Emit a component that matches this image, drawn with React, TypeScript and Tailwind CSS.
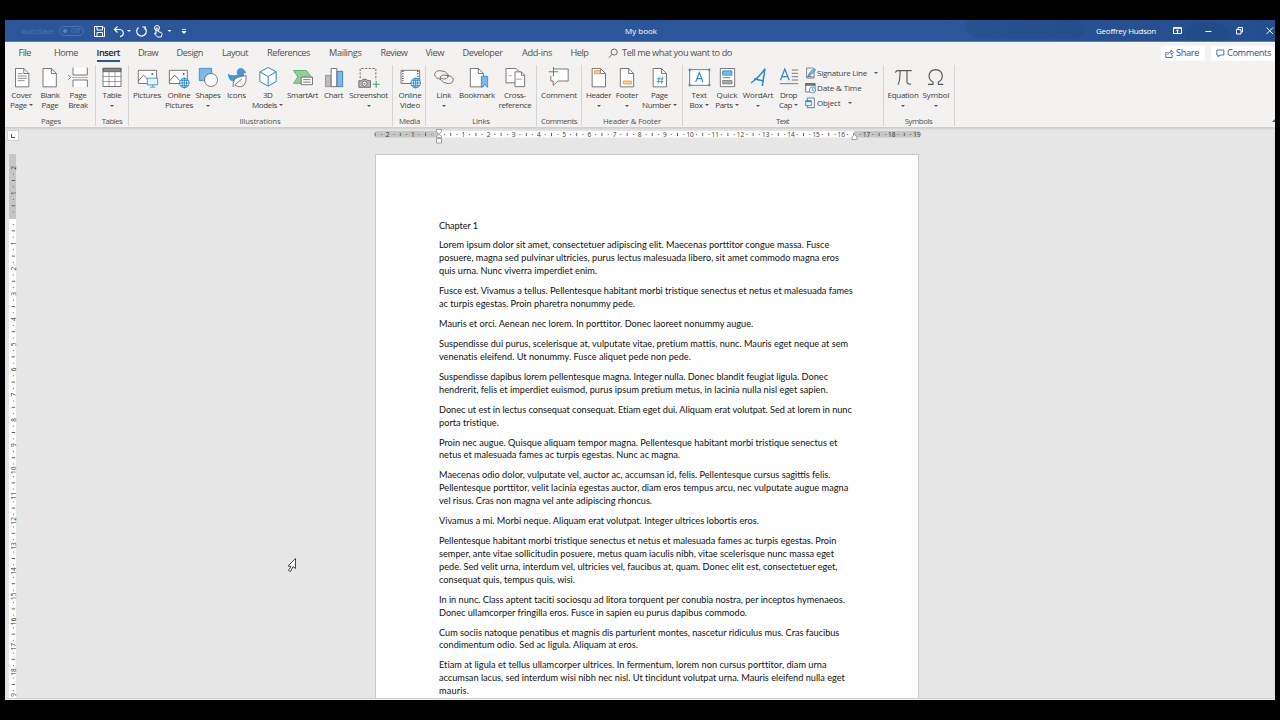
import React, { useLayoutEffect, useRef } from "react";

/** Single line of text, tracked so that it occupies `w` pixels. */
function Fit({ w, children, className = "" }: { w: number; children: string; className?: string }) {
  const ref = useRef<HTMLSpanElement>(null);
  useLayoutEffect(() => {
    const el = ref.current;
    if (!el) return;
    el.style.letterSpacing = "0px";
    const natural = el.getBoundingClientRect().width;
    el.style.letterSpacing = `${(w - natural) / children.length}px`;
  }, [w, children]);
  return (
    <span ref={ref} className={`inline-block whitespace-pre ${className}`}>
      {children}
    </span>
  );
}

const INK = "#5a5a5a";
const BLUE = "#2b88c8";
const SKY = "#7fb8e8";

const Icon = ({ x, children }: { x: number; children: React.ReactNode }) => (
  <svg
    className="block h-6 w-7 shrink-0 overflow-visible"
    viewBox={`${x - 42} 150 84 72`}
    fill="none"
    stroke={INK}
    strokeWidth="2.4"
  >
    {children}
  </svg>
);

const Doc = ({ x, w = 40 }: { x: number; w?: number }) => (
  <>
    <path d={`M${x} 160.500h${w - 15}l15 15v40h-${w}z`} fill="#fff" />
    <path d={`M${x + w - 15} 160.500v15h15`} />
  </>
);

const Globe = ({ x, y }: { x: number; y: number }) => (
  <g stroke={BLUE} strokeWidth="2.6">
    <circle cx={x} cy={y} r="14.500" fill="#eef6fc" />
    <ellipse cx={x} cy={y} rx="6.500" ry="14.500" />
    <path d={`M${x - 14.5} ${y}h29M${x - 12} ${y - 8}h24M${x - 12} ${y + 8}h24M${x} ${y - 14.5}v29`} />
  </g>
);

const Plus = ({ x, y, r = 10 }: { x: number; y: number; r?: number }) => (
  <path d={`M${x - r} ${y}h${2 * r}M${x} ${y - r}v${2 * r}`} stroke="#35a567" strokeWidth="3.200" />
);

const Caret = ({ className = "" }: { className?: string }) => (
  <svg className={`inline-block h-[2px] w-[4px] shrink-0 ${className}`} viewBox="0 0 4 2">
    <path d="M0 0h4L2 2z" fill="#555" />
  </svg>
);

type Line = [string, number, boolean?];

function Btn({ cls, icon, lines, caret }: { cls: string; icon: React.ReactNode; lines: Line[]; caret?: boolean }) {
  return (
    <div className={`flex shrink-0 flex-col items-center ${cls}`}>
      {icon}
      <div className="mt-[1px] flex flex-col items-center text-[8px] leading-[10.300px] text-[#404040]">
        {lines.map(([t, w, c]) => (
          <div key={t} className="flex items-center">
            <Fit w={w}>{t}</Fit>
            {c && <Caret className="ml-[2px]" />}
          </div>
        ))}
        {caret && <Caret className="mt-[4.500px]" />}
      </div>
    </div>
  );
}

function Group({ cls, label, w, children, labelCls = "" }: { cls: string; label: string; w: number; children: React.ReactNode; labelCls?: string }) {
  return (
    <div className={`flex h-[61px] shrink-0 flex-col justify-between border-r border-[#d6d4d2] ${cls}`}>
      <div className="flex h-[50px]">{children}</div>
      <div className={`flex h-[10px] justify-center text-[7.800px] leading-[10px] text-[#505050] ${labelCls}`}>
        <Fit w={w}>{label}</Fit>
      </div>
    </div>
  );
}

function Small({ icon, text, w, caret, gap = "ml-1" }: { icon: React.ReactNode; text: string; w: number; caret?: boolean; gap?: string }) {
  return (
    <div className="flex h-[15.300px] items-center text-[8px] leading-[12px] text-[#404040]">
      <svg className="mr-[1px] block h-[12px] w-[11px] overflow-visible" viewBox="0 0 33 36" fill="none" stroke={INK} strokeWidth="2.400">
        {icon}
      </svg>
      <Fit w={w}>{text}</Fit>
      {caret && <Caret className={gap} />}
    </div>
  );
}

const tabs: [string, number, string][] = [
  ["File", 12.5, "ml-[13.500px]"],
  ["Home", 24, "ml-[23px]"],
  ["Insert", 23.5, "ml-[18.500px]"],
  ["Draw", 20, "ml-[18px]"],
  ["Design", 26.5, "ml-[18.500px]"],
  ["Layout", 26, "ml-[19px]"],
  ["References", 43, "ml-[19px]"],
  ["Mailings", 32.5, "ml-[19px]"],
  ["Review", 27, "ml-[19px]"],
  ["View", 18.5, "ml-[18px]"],
  ["Developer", 40, "ml-[18.500px]"],
  ["Add-ins", 30, "ml-[19.500px]"],
  ["Help", 18, "ml-[18.500px]"],
];

const paragraphs: [string, number][][] = [
  [["Chapter 1", 39]],
  [
    ["Lorem ipsum dolor sit amet, consectetuer adipiscing elit. Maecenas porttitor congue massa. Fusce", 390],
    ["posuere, magna sed pulvinar ultricies, purus lectus malesuada libero, sit amet commodo magna eros", 400],
    ["quis urna. Nunc viverra imperdiet enim.", 158],
  ],
  [
    ["Fusce est. Vivamus a tellus. Pellentesque habitant morbi tristique senectus et netus et malesuada fames", 414],
    ["ac turpis egestas. Proin pharetra nonummy pede.", 196],
  ],
  [["Mauris et orci. Aenean nec lorem. In porttitor. Donec laoreet nonummy augue.", 314]],
  [
    ["Suspendisse dui purus, scelerisque at, vulputate vitae, pretium mattis, nunc. Mauris eget neque at sem", 409],
    ["venenatis eleifend. Ut nonummy. Fusce aliquet pede non pede.", 252],
  ],
  [
    ["Suspendisse dapibus lorem pellentesque magna. Integer nulla. Donec blandit feugiat ligula. Donec", 389],
    ["hendrerit, felis et imperdiet euismod, purus ipsum pretium metus, in lacinia nulla nisl eget sapien.", 389],
  ],
  [
    ["Donec ut est in lectus consequat consequat. Etiam eget dui. Aliquam erat volutpat. Sed at lorem in nunc", 413],
    ["porta tristique.", 60],
  ],
  [
    ["Proin nec augue. Quisque aliquam tempor magna. Pellentesque habitant morbi tristique senectus et", 398.5],
    ["netus et malesuada fames ac turpis egestas. Nunc ac magna.", 241],
  ],
  [
    ["Maecenas odio dolor, vulputate vel, auctor ac, accumsan id, felis. Pellentesque cursus sagittis felis.", 391.5],
    ["Pellentesque porttitor, velit lacinia egestas auctor, diam eros tempus arcu, nec vulputate augue magna", 409],
    ["vel risus. Cras non magna vel ante adipiscing rhoncus.", 213],
  ],
  [["Vivamus a mi. Morbi neque. Aliquam erat volutpat. Integer ultrices lobortis eros.", 320]],
  [
    ["Pellentesque habitant morbi tristique senectus et netus et malesuada fames ac turpis egestas. Proin", 397.5],
    ["semper, ante vitae sollicitudin posuere, metus quam iaculis nibh, vitae scelerisque nunc massa eget", 395],
    ["pede. Sed velit urna, interdum vel, ultricies vel, faucibus at, quam. Donec elit est, consectetuer eget,", 398.5],
    ["consequat quis, tempus quis, wisi.", 136],
  ],
  [
    ["In in nunc. Class aptent taciti sociosqu ad litora torquent per conubia nostra, per inceptos hymenaeos.", 406],
    ["Donec ullamcorper fringilla eros. Fusce in sapien eu purus dapibus commodo.", 308],
  ],
  [
    ["Cum sociis natoque penatibus et magnis dis parturient montes, nascetur ridiculus mus. Cras faucibus", 400.5],
    ["condimentum odio. Sed ac ligula. Aliquam at eros.", 199],
  ],
  [
    ["Etiam at ligula et tellus ullamcorper ultrices. In fermentum, lorem non cursus porttitor, diam urna", 387.5],
    ["accumsan lacus, sed interdum wisi nibh nec nisl. Ut tincidunt volutpat urna. Mauris eleifend nulla eget", 406],
    ["mauris.", 30],
  ],
];

const CM = 25.2;

function Marks({ from, to, vertical }: { from: number; to: number; vertical?: boolean }) {
  const out: React.ReactNode[] = [];
  for (let q = from * 4; q <= to * 4; q++) {
    if (q === 0) continue;
    const p = (q / 4) * CM;
    if (q % 4 === 0) {
      out.push(
        <text
          key={q}
          transform={vertical ? `translate(6.600 ${p}) rotate(-90)` : `translate(${p} 6.300)`}
          textAnchor="middle"
          fontSize="6.500"
          fill="#333"
        >
          {Math.abs(q / 4)}
        </text>
      );
    } else {
      const len = q % 2 === 0 ? 3.4 : 1;
      out.push(
        vertical ? (
          <rect key={q} x={4.4 - len / 2} y={p - 0.5} width={len} height="1" fill="#666" />
        ) : (
          <rect key={q} x={p - 0.5} y={4 - len / 2} width="1" height={len} fill="#666" />
        )
      );
    }
  }
  return <>{out}</>;
}

function TitleBar() {
  return (
    <div className="relative flex h-[22px] shrink-0 items-center overflow-hidden border-b border-[#5b7db4] bg-[#2b579a] text-white">
      <svg className="absolute top-0 right-0 h-[22px] w-[330px]" viewBox="0 0 330 22">
        <defs>
          <linearGradient id="fade" x1="0" x2="1">
            <stop offset="0" stopColor="#244d8c" stopOpacity="0" />
            <stop offset="0.500" stopColor="#244d8c" stopOpacity=".7" />
            <stop offset="1" stopColor="#244d8c" stopOpacity=".9" />
          </linearGradient>
        </defs>
        <rect width="330" height="22" fill="url(#fade)" />
        <path d="M22 0h110q8 6 8 11t-8 8H32q-14-8-10-19z" fill="#21477f" opacity=".35" />
        <ellipse cx="262" cy="14" rx="22" ry="12" fill="#21477f" opacity=".5" />
      </svg>
      <div className="relative flex w-full items-center">
        <Fit w={33} className="ml-[16px] text-[8px] text-[#5075af]">AutoSave</Fit>
        <div className="ml-[5px] flex h-[10px] w-[25px] shrink-0 items-center rounded-full border border-[#4d73ae] px-[3px] text-[#5075af]">
          <span className="h-[4px] w-[4px] rounded-full bg-[#5f82b8]" />
          <Fit w={9} className="ml-[4px] text-[6.500px] leading-[8px]">Off</Fit>
        </div>
        <svg className="ml-[9px] block h-[14px] w-[98px] shrink-0" viewBox="93 24 98 14" fill="none" stroke="#fff" strokeWidth="1">
          <path d="M94.500 26.500h8.500l1.500 1.500v8.500h-10zM97 26.500v3.500h5.500v-3.500M97 36.500v-4h5.500v4" />
          <path d="M117.500 26.500l-3 3 3 3M114.500 29.500h5q4 .5 3.800 4-.3 2.800-3.300 3.200" strokeWidth="1.200" />
          <path d="M127 30h4l-2 2zM167.500 30h4l-2 2z" fill="#fff" stroke="none" />
          <path d="M138.500 27.500a4.800 4.800 0 1 0 6 0M142.200 27h3v3" strokeWidth="1.200" />
          <circle cx="157" cy="28" r="2.500" />
          <path d="M156 34v-5.500q1-1.300 2 0v3l3.300 1q1 .5.600 2l-.7 2.500h-3.700l-3-3.200q-.3-1.300 1.500-.3" />
          <path d="M182 29.500h4M182 31.500h4l-2 2z" fill="#fff" strokeWidth=".8" />
        </svg>
        <Fit w={32} className="ml-[434px] text-[8px]">My book</Fit>
        <Fit w={60} className="ml-[439px] text-[8px]">Geoffrey Hudson</Fit>
        <svg className="ml-[17px] block h-[12px] w-[102px] shrink-0" viewBox="1173 25 102 12" fill="none" stroke="#fff" strokeWidth="1">
          <path d="M1173.500 27.500h8v6h-8zM1173.500 28.300h8M1177.500 33v-3M1176 31.200l1.500-1.500 1.500 1.500M1205.500 31.500h6" />
          <path d="M1236.500 29.500h4.500v4.500h-4.500zM1238 29v-1.500h4.500v4.500h-1.500M1266.500 27.500l6.500 6.500M1273 27.500l-6.500 6.500" />
        </svg>
      </div>
    </div>
  );
}

function Tabs() {
  return (
    <div className="flex h-[21px] shrink-0 items-center pt-[1px] text-[9.200px] leading-[14px] text-[#505050]">
      {tabs.map(([t, w, ml]) => (
        <div
          key={t}
          className={`flex h-[18px] items-center border-b-2 pt-[1px] ${ml} ${t === "Insert" ? "border-[#2b579a] text-[#222]" : "border-transparent"}`}
        >
          <Fit w={w} className={t === "Insert" ? "font-semibold" : ""}>{t}</Fit>
        </div>
      ))}
      <svg className="ml-[19px] block h-[11px] w-[11px]" viewBox="0 0 11 11" fill="none" stroke="#666">
        <circle cx="6.500" cy="4" r="3.200" />
        <path d="M4 6.500L.8 10" />
      </svg>
      <Fit w={110} className="ml-[4px]">Tell me what you want to do</Fit>
      <div className="ml-[429px] flex h-[15px] w-[44px] shrink-0 items-center bg-white text-[#2b4f8f]">
        <svg className="ml-[4px] block h-[9px] w-[9px]" viewBox="0 0 9 9" fill="none" stroke="#44649c" strokeWidth=".9">
          <path d="M2.500 3.500H.8v5h6.400V6M2.500 6Q3 3 6 3V1l2.300 2.500L6 5.500V4" />
        </svg>
        <Fit w={23} className="ml-[2px] font-medium">Share</Fit>
      </div>
      <div className="ml-[6px] flex h-[15px] w-[64px] shrink-0 items-center bg-white text-[#2b4f8f]">
        <svg className="ml-[5px] block h-[9px] w-[9px]" viewBox="0 0 9 9" fill="none" stroke="#44649c" strokeWidth=".9">
          <path d="M.8 1h7v5H4L2.200 8V6H.8z" />
        </svg>
        <Fit w={44} className="ml-[2px] font-medium">Comments</Fit>
      </div>
    </div>
  );
}

function Ribbon() {
  return (
    <div className="relative flex h-[64px] shrink-0 pt-[2px]">
      <Group cls="w-[91px] pl-[2px]" label="Pages" w={20}>
        <Btn cls="w-[29px]" lines={[["Cover", 20.5], ["Page", 17, true]]} icon={
          <Icon x={64.5}><Doc x={45} /><path d="M52 176h14M52 183h27M52 190h27M52 197h20" strokeWidth="2" /></Icon>} />
        <Btn cls="w-[28px]" lines={[["Blank", 19], ["Page", 17]]} icon={<Icon x={150}><Doc x={129} /></Icon>} />
        <Btn cls="w-[28px]" lines={[["Page", 17], ["Break", 19.5]]} icon={
          <Icon x={234}>
            <path d="M219 158v22h43v-22M219 216v-21h43v21" fill="#fff" />
            <path d="M216 187.500h48" stroke="#aaa" />
            <path d="M205 180l7 7-7 7" stroke={BLUE} strokeWidth="3" />
          </Icon>} />
      </Group>
      <Group cls="w-[33px] pl-[0px]" label="Tables" w={20.5}>
        <Btn cls="w-[32px]" caret lines={[["Table", 19]]} icon={
          <Icon x={336}>
            <path d="M309 160h54v54.500h-54z" fill="#fff" />
            <path d="M309 160h54v10h-54z" fill="#8a8a8a" />
            <path d="M327 170v44M345 170v44M309 184.500h54M309 199.500h54" stroke="#888" />
          </Icon>} />
      </Group>
      <Group cls="w-[264px] pl-[2px]" label="Illustrations" w={41} labelCls="pr-[3px]">
        <Btn cls="w-[32px]" lines={[["Pictures", 28]]} icon={
          <Icon x={441}>
            <path d="M415 166h55v39.500h-55z" fill="#fff" />
            <path d="M415 198l16-18 15 17" />
            <circle cx="457" cy="177" r="3" fill={INK} stroke="none" />
            <path d="M442 189.500h31v20h-31z" fill="#e6f2fb" stroke={BLUE} />
            <path d="M458 210v6M450 216.500h16" stroke={BLUE} />
          </Icon>} />
        <Btn cls="w-[32px]" lines={[["Online", 23], ["Pictures", 28]]} icon={
          <Icon x={537}>
            <path d="M508 166h54v39.500h-54z" fill="#fff" />
            <path d="M508 198l16-18 15 17" />
            <circle cx="551" cy="177" r="3" fill={INK} stroke="none" />
            <Globe x={553} y={204} />
          </Icon>} />
        <Btn cls="w-[26px]" caret lines={[["Shapes", 25]]} icon={
          <Icon x={624}>
            <path d="M598 160h37v37h-37z" fill={SKY} stroke={BLUE} />
            <circle cx="633" cy="195" r="19.500" fill="#fff" />
          </Icon>} />
        <Btn cls="w-[31px]" lines={[["Icons", 19]]} icon={
          <Icon x={709.5}>
            <path d="M711 180q-4-7-1-14 4-7 12-7 9 1 11 9l5 3q-2 4-7 4-2 4-1 9-8 10-22 15h-13q-12-6-13-23 8 5 15 5z" fill="#4a97cf" stroke="none" />
            <path d="M698 216q-2-24 14-29 12-4 25-5 2 20-7 29-11 9-27-1l22-19" fill="#fff" />
          </Icon>} />
        <Btn cls="w-[31px]" lines={[["3D", 9], ["Models", 25, true]]} icon={
          <Icon x={802.5}>
            <path d="M803 157.500l24 13v29l-24 14-25-14v-29z" fill="#fff" stroke={BLUE} strokeWidth="3" />
            <path d="M778 170.500l25 14 24-14M803 185v28" stroke={BLUE} strokeWidth="3" />
          </Icon>} />
        <Btn cls="w-[39px]" lines={[["SmartArt", 31]]} icon={
          <Icon x={907.5}>
            <path d="M879 166.500h39l14 19-14 19.500h-39l13-19.500z" fill="#93cf9b" stroke="#4aa764" />
            <path d="M902 186.500h34v22.500h-34z" fill="#fff" />
            <path d="M908 194h22M908 201.500h22" />
          </Icon>} />
        <Btn cls="w-[23px]" lines={[["Chart", 19]]} icon={
          <Icon x={40.5}>
            <path d="M15 181h17v34H15z" fill="#bdbdbd" stroke="#888" />
            <path d="M32 160.500h17v54.500H32z" fill="#fff" />
            <path d="M49.500 169h17v46h-17z" fill={SKY} stroke="#2d6fa8" />
          </Icon>} />
        <Btn cls="w-[47px]" caret lines={[["Screenshot", 38.5]]} icon={
          <Icon x={145.5}>
            <path d="M119 190v-29.500h47v35" strokeDasharray="7 4" />
            <path d="M115 197h9l3-4h11l3 4h9v20h-35z" fill="#b5b5b5" />
            <circle cx="132" cy="206" r="7.500" fill="#fff" />
            <circle cx="132" cy="206" r="3" fill="#777" stroke="none" />
            <Plus x={167} y={208} />
          </Icon>} />
      </Group>
      <Group cls="w-[33px] pl-[1px]" label="Media" w={21}>
        <Btn cls="w-[32px]" lines={[["Online", 23], ["Video", 20]]} icon={
          <Icon x={270}>
            <path d="M243 166h56v39.500h-56z" fill="#fff" />
            <path d="M248.500 168v36M293.500 168v36" strokeDasharray="3 4" strokeWidth="4" stroke="#333" />
            <Globe x={287} y={204} />
          </Icon>} />
      </Group>
      <Group cls="w-[111px] pl-[4px]" label="Links" w={17.5} labelCls="pr-[4px]">
        <Btn cls="w-[28px]" caret lines={[["Link", 15]]} icon={
          <Icon x={372}>
            <path d="M363 193q-18-3-19-14 1-12 16-12 17 0 24 11 4 12-10 14-10 0-14-5" />
            <path d="M379 181q18 1 21 12 0 12-15 13-16-1-24-13-3-11 10-13 8-1 14 5" />
          </Icon>} />
        <Btn cls="w-[38px]" lines={[["Bookmark", 36]]} icon={
          <Icon x={471}>
            <Doc x={451} w={39} />
            <path d="M484 184h19v33l-9.500-8-9.500 8z" fill={SKY} stroke={BLUE} />
          </Icon>} />
        <Btn cls="w-[38px]" lines={[["Cross-", 22], ["reference", 33]]} icon={
          <Icon x={585}>
            <path d="M558 160.500h30l10 10v33h-40z" fill="#fff" />
            <path d="M585 170.500h19l10 10v34.500h-29z" fill="#fff" />
            <path d="M604 171v10h10" />
            <path d="M566 182h9M588 192.500h17" stroke="#d36b76" />
          </Icon>} />
      </Group>
      <Group cls="w-[45px]" label="Comments" w={36}>
        <Btn cls="w-[44px]" lines={[["Comment", 36]]} icon={
          <Icon x={715.5}>
            <path d="M691 162h52v36h-30l-15 13v-13h-7z" fill="#fff" />
            <path d="M684 157h15v26h-15z" fill="#f3f2f1" stroke="none" />
            <Plus x={699} y={170} r={14} />
          </Icon>} />
      </Group>
      <Group cls="w-[101px] pl-[2px]" label="Header & Footer" w={58} labelCls="pr-[2px]">
        <Btn cls="w-[29px]" caret lines={[["Header", 25]]} icon={
          <Icon x={835.5}><Doc x={815} /><path d="M822 167h17v9h-17z" fill="#fbd29a" stroke="#e8912d" /></Icon>} />
        <Btn cls="w-[28px]" caret lines={[["Footer", 22.5]]} icon={
          <Icon x={921}><Doc x={901} /><path d="M910 198h24v9h-24z" fill="#fbd29a" stroke="#e8912d" /></Icon>} />
        <Btn cls="w-[37px]" lines={[["Page", 17], ["Number", 29, true]]} icon={
          <Icon x={58.5}>
            <Doc x={38} />
            <path d="M56 185l-3 21M66 185l-3 21M49 191.500h20M48 199.500h20" stroke={BLUE} />
          </Icon>} />
      </Group>
      <Group cls="w-[201px] pl-[2px]" label="Text" w={13} labelCls="pr-[3px]">
        <Btn cls="w-[28px]" lines={[["Text", 15], ["Box", 13, true]]} icon={
          <Icon x={177}>
            <path d="M149 164h59v47h-59z" fill="#fff" />
            <path d="M146 161h6v6h-6zM205 161h6v6h-6zM146 208h6v6h-6zM205 208h6v6h-6z" fill={BLUE} stroke="none" />
            <path d="M167 201l11-28 11 28M171 191h14" stroke={BLUE} strokeWidth="3.400" />
          </Icon>} />
        <Btn cls="w-[28px]" lines={[["Quick", 21], ["Parts", 17.5, true]]} icon={
          <Icon x={261}>
            <path d="M241 160.500h43V215h-43z" fill="#fff" />
            <path d="M248 167.500h28v13h-28z" fill={SKY} stroke={BLUE} />
            <path d="M248 188h22" />
            <path d="M248 196.500h28v10h-28z" fill="#aaa" stroke="#777" />
          </Icon>} />
        <Btn cls="w-[34px]" caret lines={[["WordArt", 30.5]]} icon={
          <Icon x={354}>
            <path d="M333 204q24-16 42-43l-8 52M342 191l29 7" stroke={BLUE} strokeWidth="4.500" />
          </Icon>} />
        <Btn cls="w-[27px]" lines={[["Drop", 17], ["Cap", 13, true]]} icon={
          <Icon x={445.5}>
            <path d="M420 196l13-34 13 34M425 185h17" stroke={BLUE} strokeWidth="3.600" />
            <path d="M454 165h19M454 175h19M454 185h19M454 195h19M418 206h55" />
          </Icon>} />
        <div className="ml-[3px] flex flex-col">
          <Small text="Signature Line" w={50} caret gap="ml-[6.500px]" icon={
            <>
              <path d="M5 3h17l5 5v25H5z" fill="#fff" />
              <path d="M9 28l4-10L27 4l5 5-14 14z" fill="#7db6e4" stroke={BLUE} />
              <path d="M6 29h17" />
            </>} />
          <Small text="Date & Time" w={44.5} icon={
            <>
              <path d="M2 5h28v25H2z" fill="#fff" />
              <path d="M2 5h28v5H2z" fill="#888" />
              <circle cx="22" cy="24" r="9" fill="#fff" stroke={BLUE} />
              <path d="M22 18v7h5" stroke={BLUE} />
            </>} />
          <Small text="Object" w={23.5} caret gap="ml-[7px]" icon={
            <>
              <path d="M7 3h21v29H7z" fill="#fff" />
              <path d="M2 11h18v15H2z" fill="#dceefa" stroke={BLUE} />
              <path d="M2 13h18" stroke={BLUE} strokeWidth="4" />
            </>} />
        </div>
      </Group>
      <Group cls="w-[71px] pl-[2px]" label="Symbols" w={27.5} labelCls="pr-[3px]">
        <Btn cls="w-[34px]" caret lines={[["Equation", 31]]} icon={
          <Icon x={789}>
            <path d="M766 173q2-6 8-6h41M780 168q1 28-6 41M801 168v33q1 8 12 6" strokeWidth="3.400" />
          </Icon>} />
        <Btn cls="w-[32px]" caret lines={[["Symbol", 27]]} icon={
          <Icon x={888}>
            <path d="M864 208h15v-7q-12-6-12-19 2-17 20-18 18 1 20 18 0 13-12 19v7h15" strokeWidth="3.400" />
          </Icon>} />
      </Group>
      <svg className="absolute right-0 bottom-[4px] h-[4px] w-[3px]" viewBox="0 0 3 4">
        <path d="M0 3l3-3v3z" fill="#555" />
      </svg>
    </div>
  );
}

function Workspace() {
  return (
    <div className="relative flex min-h-0 flex-1 bg-[#e6e6e6] shadow-[inset_0_2px_2px_#cfcfcf]">
      <div className="flex w-[370px] shrink-0 flex-col">
        <div className="mt-[3px] ml-[2px] flex h-[11px] w-[12px] items-center justify-center border border-[#cfcfcf] bg-white">
          <span className="h-[4px] w-[4px] border-b-[1.500px] border-l-[1.500px] border-[#555]" />
        </div>
        <svg className="mt-[13px] ml-[4px] block h-[544px] w-[7px] overflow-visible" viewBox="0 -65 7 544">
          <rect y="-65" width="7" height="65" fill="#c6c6c6" />
          <rect width="7" height="479" fill="#fff" />
          <g transform="translate(0 -.700)"><Marks from={-2} to={18.75} vertical /></g>
          <text transform="translate(6.600 476) rotate(-90)" textAnchor="middle" fontSize="6.500" fill="#333">9</text>
        </svg>
      </div>
      <div className="flex w-[546px] shrink-0 flex-col">
        <svg className="mt-[2px] block h-[15px] w-[546px] overflow-visible" viewBox="-63.500 0 546 15">
          <rect x="-63.500" y="2" width="64" height="6.500" fill="#c6c6c6" />
          <rect x="0" y="2" width="416" height="6.500" fill="#fff" />
          <rect x="416" y="2" width="65" height="6.500" fill="#c6c6c6" />
          <g transform="translate(-.400 1.500)"><Marks from={-2.5} to={19} /></g>
          <g fill="#fff" stroke="#8c8c8c" strokeWidth=".8">
            <path d="M-2 .5h5v2L.5 5.500-2 2.500zM-2 8.500v-1.500L.5 5.500 3 7v1.500zM-2 9.500h5v4.500h-5z" />
            <path d="M413.500 10.500v-2.500l2.500-2.500 2.500 2.500v2.500z" />
          </g>
        </svg>
        <div className="mt-[10px] h-[545px] w-[544px] overflow-hidden border border-b-0 border-[#c8c8c8] bg-white pt-[64.500px] pl-[63px] font-[Lato,Carlito,sans-serif] text-[9.200px] leading-[12.880px] text-[#111]">
          {paragraphs.map((lines, i) => (
            <div key={i} className="mb-[7.100px]">
              {lines.map(([t, w]) => (
                <div key={t} className="h-[12.880px]">
                  <Fit w={w}>{t}</Fit>
                </div>
              ))}
            </div>
          ))}
        </div>
      </div>
      <svg className="absolute top-[430px] left-[282px] h-[16px] w-[10px]" viewBox="0 0 10 16">
        <path d="M8.500 1.500v10l-2.500-2-2.500 5-2-1L4 9.500 1 9z" fill="#fff" stroke="#333" strokeWidth=".9" />
      </svg>
      <div className="absolute inset-x-0 bottom-0 h-[2px] border-t border-[#cfcfcf] bg-[#efefef]" />
    </div>
  );
}

export default function App() {
  return (
    <div className="h-[720px] w-[1280px] overflow-hidden bg-black px-[5px] pt-[20px] pb-[20px]">
      <div className="flex h-[680px] w-[1270px] flex-col overflow-hidden bg-[#f3f2f1] font-['Open_Sans','Noto_Sans',sans-serif]">
        <TitleBar />
        <Tabs />
        <Ribbon />
        <Workspace />
      </div>
    </div>
  );
}
